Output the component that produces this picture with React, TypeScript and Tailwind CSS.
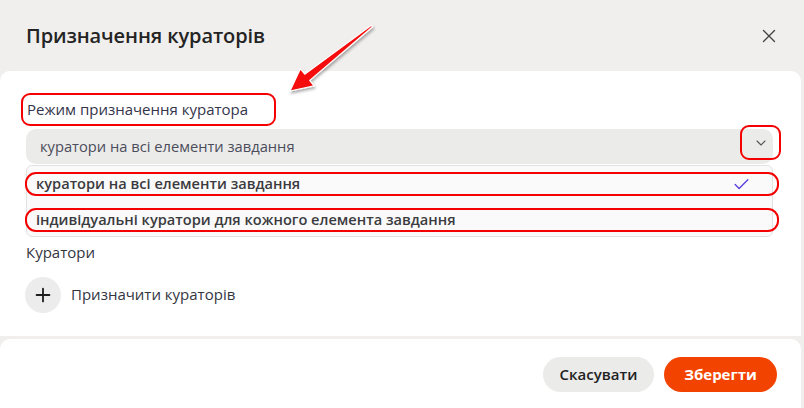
import { Check, ChevronDown, Plus, X } from 'lucide-react'

const OPTIONS = [
  'куратори на всі елементи завдання',
  'індивідуальні куратори для кожного елемента завдання',
]

export default function App() {
  return (
    <div className="relative w-[804px] h-[408px] overflow-hidden bg-[#f0efed] font-['Open_Sans',sans-serif] text-[#2b2b33]">
      {/* header */}
      <div className="h-[71px] flex items-center justify-between pl-[26px] pr-[24px]">
        <h1 className="text-[20px] font-semibold text-[#242424] tracking-[-0.1px]">Призначення кураторів</h1>
        <X className="w-[22px] h-[22px] text-[#444]" strokeWidth={1.5} />
      </div>

      {/* body */}
      <div className="relative mr-[3px] h-[265px] bg-white rounded-t-[10px] pl-[26px] pr-[28px] pt-[22px]">
        <div className="ml-[-5px] w-[255px] h-[33px] flex items-center pl-[4px] border-[2.5px] border-[#f50000] rounded-[9px]">
          <span className="text-[15px] font-medium text-[#33354a]">Режим призначення куратора</span>
        </div>

        <div className="relative mt-[3px] h-[35px] bg-[#ebebea] rounded-[10px] flex items-center pl-[14px]">
          <span className="text-[14.7px] text-[#4b4d5a]">куратори на всі елементи завдання</span>
          <div className="absolute right-[-8px] top-[-4px] w-[41px] h-[35px] border-[2.5px] border-[#f50000] rounded-[9px] flex items-center justify-center">
            <ChevronDown className="w-[16px] h-[16px] text-[#555]" strokeWidth={1.6} />
          </div>
        </div>

        <div className="mt-[1px] border border-[#e2e2e2] rounded-[6px] bg-[#fafafa] pt-[6px] pb-[4px] flex flex-col gap-[12px]">
          {OPTIONS.map((opt, i) => (
            <div
              key={opt}
              className="ml-[-2px] mr-[-7px] h-[24px] border-[2.5px] border-[#f50000] rounded-[11px] flex items-center justify-between pl-[9px] pr-[26px]"
            >
              <span className="text-[14.6px] font-semibold text-[#3a3a40]">{opt}</span>
              {i === 0 && <Check className="w-[19px] h-[19px] text-[#5b3fe0]" strokeWidth={1.7} />}
            </div>
          ))}
        </div>

        <div className="mt-[4px] text-[15px] font-medium text-[#33353f]">Куратори</div>

        <div className="mt-[13px] ml-[-1px] flex items-center gap-[10px]">
          <div className="w-[36px] h-[36px] rounded-full bg-[#ececec] flex items-center justify-center">
            <Plus className="w-[22px] h-[22px] text-[#1f1f1f]" strokeWidth={2} />
          </div>
          <span className="text-[15px] font-medium text-[#33353f]">Призначити кураторів</span>
        </div>
      </div>

      {/* footer */}
      <div className="mt-[3px] mr-[3px] h-[69px] bg-white rounded-t-[10px] flex justify-end items-start pt-[18px] pr-[24px] gap-[10px]">
        <button className="w-[111px] h-[35px] rounded-full bg-[#ebebea] text-[15px] font-semibold text-[#222]">Скасувати</button>
        <button className="w-[113px] h-[35px] rounded-full bg-[#f24400] text-[15px] font-bold text-white">Зберегти</button>
      </div>

      {/* annotation arrow */}
      <svg className="absolute left-0 top-0 pointer-events-none" width="804" height="408">
        <defs>
          <filter id="sh" x="-20%" y="-20%" width="140%" height="140%">
            <feDropShadow dx="1" dy="2" stdDeviation="1.5" floodColor="#000" floodOpacity="0.35" />
          </filter>
        </defs>
        <polygon
          points="290,91 300.4,68.7 304.7,74.2 371.4,25.2 372.6,26.8 309.7,80.4 314,85.9"
          fill="#f50a0a"
          stroke="#fff"
          strokeWidth="1.2"
          strokeLinejoin="round"
          filter="url(#sh)"
        />
      </svg>
    </div>
  )
}
